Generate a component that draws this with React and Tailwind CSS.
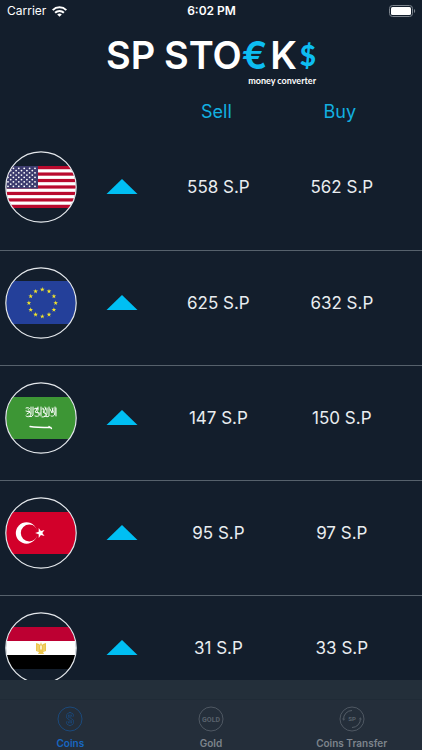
const STAR = '0,-1 0.225,-0.309 0.951,-0.309 0.363,0.118 0.588,0.809 0,0.382 -0.588,0.809 -0.363,0.118 -0.951,-0.309 -0.225,-0.309';

const Star = ({ x, y, r, fill, rotate = 0 }) => (
  <polygon points={STAR} fill={fill} transform={`translate(${x} ${y}) rotate(${rotate}) scale(${r})`} />
);

const UsFlag = () => (
  <>
    <rect y="15" width="72" height="42" fill="#fff" />
    {[0, 1, 2, 3, 4, 5, 6].map((i) => (
      <rect key={i} y={15 + i * 6.46} width="72" height="3.23" fill="#b90a2e" />
    ))}
    <rect y="15" width="33" height="22.6" fill="#3c3b6e" />
    {[0, 1, 2, 3, 4, 5, 6, 7, 8].map((row) =>
      [0, 1, 2, 3, 4, 5].map((col) =>
        row % 2 && col === 5 ? null : (
          <circle
            key={`${row}-${col}`}
            cx={3 + col * 5.4 + (row % 2 ? 2.7 : 0)}
            cy={17.3 + row * 2.25}
            r="0.9"
            fill="#fff"
          />
        )
      )
    )}
  </>
);

const EuFlag = () => (
  <>
    <rect y="14" width="72" height="43" fill="#24409a" />
    {[...Array(12).keys()].map((i) => (
      <Star
        key={i}
        x={37.3 + 13.4 * Math.sin((i * Math.PI) / 6)}
        y={36 - 13.4 * Math.cos((i * Math.PI) / 6)}
        r={2.5}
        fill="#f4e62a"
      />
    ))}
  </>
);

const SaudiFlag = () => (
  <>
    <rect y="15" width="72" height="42" fill="#3d9635" />
    <g fill="none" stroke="#fff" strokeWidth="1" strokeLinecap="round">
      <path d="M21 26c2-1 3 0 4 1M21 29l4 1-3 2M21 34c3 2 5 0 5-3v-6M28 25v8c-1 2-3 2-4 1M29 27l4-1-3 4 4 1M30 34c3 1 5 0 5-3M33 25v3M36 25v9M37 27c2-1 3 1 1 3l3 2M37 35c3 0 5-1 5-4v-5M40 25l1 3M44 25v9c-1 1-3 1-4 0M45 27l2 4 1-5M46 34c2 1 4-1 4-3v-6M51 26v8" />
      <path d="M23 27l3 5M31 26l3 7M38 26l3 7M47 26l3 7" strokeWidth="0.7" />
      <path d="M25 44.5c6 1 12 1 21 1M44 44.5l2.5 2" strokeWidth="1.3" />
    </g>
  </>
);

const TurkishFlag = () => (
  <>
    <rect y="15" width="72" height="42" fill="#d2002a" />
    <circle cx="21.5" cy="36" r="10.7" fill="#fff" />
    <circle cx="24.3" cy="36" r="8.5" fill="#d2002a" />
    <Star x={35.3} y={36} r={5.2} fill="#fff" rotate={-90} />
  </>
);

const EgyptianFlag = () => (
  <>
    <rect y="15" width="72" height="14" fill="#bd0032" />
    <rect y="29" width="72" height="14" fill="#fff" />
    <rect y="43" width="72" height="14" fill="#000" />
    <path d="M31 31l3 1 1 1 1-3 1 3 1-1 3-1v8l-3 1 1 2h-6l1-2-3-1z" fill="#ecc54c" />
    <path d="M33 33v6M39 33v6" stroke="#f7e3a0" strokeWidth="0.7" />
    <path d="M36 33.5v4" stroke="#fff" strokeWidth="1.4" />
  </>
);

const coins = [
  { name: 'US dollar', Flag: UsFlag, sell: 558, buy: 562 },
  { name: 'Euro', Flag: EuFlag, sell: 625, buy: 632 },
  { name: 'Saudi riyal', Flag: SaudiFlag, sell: 147, buy: 150 },
  { name: 'Turkish lira', Flag: TurkishFlag, sell: 95, buy: 97 },
  { name: 'Egyptian pound', Flag: EgyptianFlag, sell: 31, buy: 33 },
];

const StatusBar = () => (
  <div className="grid h-[22px] shrink-0 grid-cols-3 items-center pr-1.5 pl-[7px] text-xs text-white">
    <div className="flex items-center gap-1.5">
      <span>Carrier</span>
      <svg viewBox="0 0 15 11" className="h-[11px] w-[15px]" fill="none" stroke="#fff" strokeWidth="2">
        <path d="M0.7 4.1a9.7 9.7 0 0 1 13.6 0M3.1 6.7a6.3 6.3 0 0 1 8.8 0" />
        <path d="M7.5 10.8L5.2 8.5a3.3 3.3 0 0 1 4.6 0z" fill="#fff" stroke="none" />
      </svg>
    </div>
    <span className="text-center font-semibold">6:02 PM</span>
    <svg viewBox="0 0 27 12" className="h-3 w-[27px] justify-self-end">
      <rect x="0.5" y="0.5" width="23" height="11" rx="3" fill="none" stroke="#7d858e" />
      <rect x="2" y="2" width="20" height="8" rx="1.5" fill="#fff" />
      <path d="M25 4v4c1.6-.6 1.6-3.4 0-4z" fill="#7d858e" />
    </svg>
  </div>
);

const Logo = () => (
  <div className="mx-auto flex w-[210px] flex-col items-end">
    <h1 className="flex w-full items-center justify-between text-[38px] leading-10 font-semibold whitespace-nowrap text-white">
      <span>SP</span>
      <span className="pl-1.5">
        STO<span className="text-[#0dbdf2]">€</span>
      </span>
      <span>K</span>
      <span className="font-['Lato'] text-[28px] leading-10 font-black text-[#0dbdf2]">$</span>
    </h1>
    <p className="font-['Lato'] text-[9px] leading-3 font-bold text-white">money converter</p>
  </div>
);

const CoinRow = ({ coin }) => {
  const { name, Flag, sell, buy } = coin;

  return (
    <tr className="h-[115px] border-b border-[#56616c] align-top text-[17px] leading-7 text-[#e9edf0]">
      <td className="pt-4 pl-[5px]">
        <svg viewBox="0 0 72 72" className="size-[72px]" role="img" aria-label={name}>
          <clipPath id={`clip-${sell}`}>
            <circle cx="36" cy="36" r="35" />
          </clipPath>
          <g clipPath={`url(#clip-${sell})`}>
            <Flag />
          </g>
          <circle cx="36" cy="36" r="35.2" fill="none" stroke="#e4e8ec" strokeWidth="1.2" />
        </svg>
      </td>
      <td className="pt-11">
        <svg viewBox="0 0 32 15" className="h-[15px] w-8">
          <path d="M16 0L31.5 15H0.5z" fill="#00bff3" />
        </svg>
      </td>
      <td className="pt-[38px] text-center">{sell} S.P</td>
      <td className="pt-[38px] text-center">{buy} S.P</td>
    </tr>
  );
};

const CoinsIcon = () => (
  <svg viewBox="0 0 26 26" className="size-[26px]" fill="none" stroke="currentColor">
    <circle cx="13" cy="13" r="12" strokeWidth="0.8" />
    <path d="M15.8 10.4c0-3.8-5.6-3.8-5.6 0 0 3.2 5.6 2 5.6 5.2 0 3.8-5.6 3.8-5.6 0M13 6.3v13.4" strokeWidth="2.2" />
    <path d="M15.8 10.4c0-3.8-5.6-3.8-5.6 0 0 3.2 5.6 2 5.6 5.2 0 3.8-5.6 3.8-5.6 0M13 7v12" stroke="#242e3a" strokeWidth="1.2" />
  </svg>
);

const GoldIcon = () => (
  <svg viewBox="0 0 26 26" className="size-[26px]">
    <circle cx="13" cy="13" r="12" fill="none" stroke="currentColor" strokeWidth="0.8" />
    <text x="13" y="15.5" textAnchor="middle" fontSize="7" fontWeight="700" fontFamily="Roboto" fill="currentColor">GOLD</text>
  </svg>
);

const TransferIcon = () => (
  <svg viewBox="0 0 26 26" className="size-[26px]" fill="none" stroke="currentColor">
    <circle cx="13" cy="13" r="12" strokeWidth="0.8" />
    <path d="M4.6 13.5a8.4 8.4 0 0 1 8.4-9M21.4 12.5a8.4 8.4 0 0 1-8.4 9" strokeWidth="0.9" />
    <path d="M3.6 12.5l1 1.8 1.2-1.6M20.2 13.3l1.2-1.6 1 1.8" strokeWidth="0.7" />
    <text x="13" y="15" textAnchor="middle" fontSize="6" fontWeight="700" fontFamily="Roboto" fill="currentColor" stroke="none">SP</text>
  </svg>
);

const tabs = [
  { label: 'Coins', Icon: CoinsIcon, active: true },
  { label: 'Gold', Icon: GoldIcon },
  { label: 'Coins Transfer', Icon: TransferIcon },
];

const TabBar = () => (
  <nav className="shrink-0 bg-[#232f3a] pt-[19px]">
    <div className="grid grid-cols-3 border-t border-[#1f2b36] bg-[#242e3a]">
      {tabs.map(({ label, Icon, active }) => (
        <button
          key={label}
          type="button"
          className={`flex h-[50px] flex-col items-center pt-1.5 ${active ? 'text-[#19508c]' : 'text-[#59626c]'}`}
        >
          <Icon />
          <span
            className={`mt-[5px] text-[10px] leading-3 font-semibold ${active ? 'text-[#1767c2]' : 'text-[#7d848c]'}`}
          >
            {label}
          </span>
        </button>
      ))}
    </div>
  </nav>
);

const App = () => (
  <div className="flex h-screen flex-col overflow-hidden bg-[#131e2c] font-['Inter',sans-serif]">
    <StatusBar />
    <header className="shrink-0 pt-[13px]">
      <Logo />
    </header>
    <main className="min-h-0 flex-1 overflow-y-auto [scrollbar-width:none]">
      <table className="w-full table-fixed border-collapse">
        <colgroup>
          <col className="w-[25%]" />
          <col className="w-[12.5%]" />
          <col className="w-[28.5%]" />
          <col className="w-[30%]" />
          <col className="w-[4%]" />
        </colgroup>
        <thead>
          <tr className="h-12 align-top text-lg text-[#12b0e0]">
            <td />
            <td />
            <th scope="col" className="pt-[11px] pr-1 font-normal">Sell</th>
            <th scope="col" className="pt-[11px] pr-1 font-normal">Buy</th>
            <td />
          </tr>
        </thead>
        <tbody>
          {coins.map((coin) => (
            <CoinRow key={coin.name} coin={coin} />
          ))}
        </tbody>
      </table>
    </main>
    <TabBar />
  </div>
);

export default App;
